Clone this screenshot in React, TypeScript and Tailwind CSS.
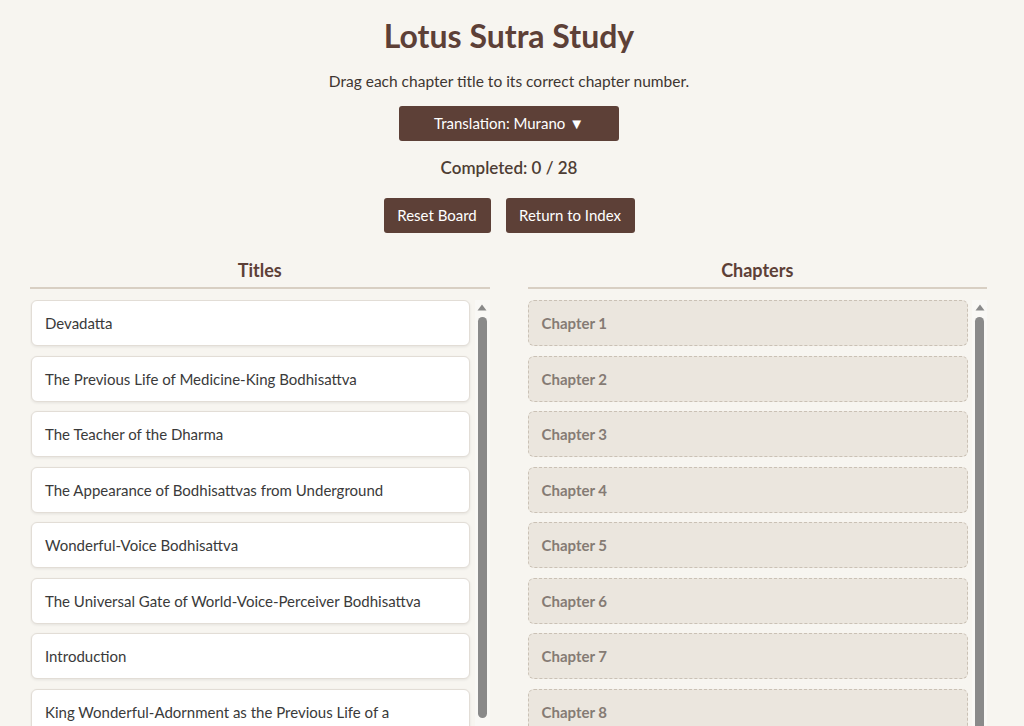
import React, { useState } from 'react';

const CHAPTERS = [
  'Introduction',
  'Expedients',
  'A Parable',
  'Understanding by Faith',
  'The Simile of Herbs',
  'Assurance of Future Buddhahood',
  'The Parable of a Magic City',
  'The Assurance of Future Buddhahood of the Five Hundred Disciples',
  'The Assurance of Future Buddhahood of the Sravakas Who Have Something More to Learn and the Sravakas Who Have Nothing More to Learn',
  'The Teacher of the Dharma',
  'Beholding the Stupa of Treasures',
  'Devadatta',
  'Encouragement for Keeping this Sutra',
  'Peaceful Practices',
  'The Appearance of Bodhisattvas from Underground',
  'The Duration of the Life of the Tathagata',
  'The Variety of Merits',
  'The Merits of a Person Who Rejoices at Hearing This Sutra',
  'The Merits of the Teacher of the Dharma',
  'Never-Despising Bodhisattva',
  'The Supernatural Powers of the Tathagatas',
  'Transmission',
  'The Previous Life of Medicine-King Bodhisattva',
  'Wonderful-Voice Bodhisattva',
  'The Universal Gate of World-Voice-Perceiver Bodhisattva',
  'Dharanis',
  'King Wonderful-Adornment as the Previous Life of a Bodhisattva',
  'The Encouragement of Universal-Sage Bodhisattva',
];

// shuffled order of the title cards (chapter indexes)
const START_ORDER = [11, 22, 9, 14, 23, 24, 0, 26, 3, 17, 1, 20, 6, 12, 27, 4, 15, 8, 19, 2, 25, 10, 7, 18, 13, 5, 21, 16];

function ScrollTrack({ thumb }: { thumb: string }) {
  return (
    <div className="w-[15px] shrink-0 flex flex-col items-center bg-[#f9f8f5]">
      <svg width="10" height="7" viewBox="0 0 10 7" className="mt-[4px]">
        <path d="M5 0.5 L9.5 6.5 L0.5 6.5 Z" fill="#8a8a8a" />
      </svg>
      <div className={`mt-[6px] w-[9px] rounded-full bg-[#8a8a8a] ${thumb}`} />
    </div>
  );
}

export default function App() {
  const [pool, setPool] = useState<number[]>(START_ORDER);
  const [placed, setPlaced] = useState<Record<number, number>>({});
  const [dragging, setDragging] = useState<number | null>(null);

  const done = Object.keys(placed).length;

  const handleDrop = (slot: number) => {
    if (dragging === null) return;
    if (dragging !== slot) {
      setDragging(null);
      return;
    }
    setPlaced(prev => ({ ...prev, [slot]: dragging }));
    setPool(prev => prev.filter(i => i !== dragging));
    setDragging(null);
  };

  const reset = () => {
    setPool(START_ORDER);
    setPlaced({});
  };

  return (
    <div className="h-screen overflow-hidden bg-[#f7f5f0] text-[#3b302b] font-['Lato','Liberation_Sans',sans-serif]">
      {/* Header */}
      <div className="flex flex-col items-center pt-[16px] pr-[6px]">
        <h1 className="text-[32px] leading-[40px] font-bold text-[#5d4037]">Lotus Sutra Study</h1>
        <p className="mt-[15px] text-[15.5px] leading-[20px] text-[#3e3631]">
          Drag each chapter title to its correct chapter number.
        </p>
        <button className="mt-[15px] w-[220px] h-[35px] rounded-[3px] bg-[#5d4037] text-white text-[15px]">
          Translation: Murano ▼
        </button>
        <div className="mt-[16px] text-[17px] leading-[22px] font-semibold text-[#4e3d34]">Completed: {done} / 28</div>
        <div className="mt-[19px] flex gap-[15px]">
          <button onClick={reset} className="w-[107px] h-[35px] rounded-[3px] bg-[#5d4037] text-white text-[15px]">
            Reset Board
          </button>
          <button className="w-[129px] h-[35px] rounded-[3px] bg-[#5d4037] text-white text-[15px]">
            Return to Index
          </button>
        </div>
      </div>

      {/* Board */}
      <div className="mt-[25px] pl-[30px] pr-[37px] grid grid-cols-2 gap-[38px]">
        <section>
          <h2 className="text-[18px] leading-[24px] font-bold text-[#5d4037] text-center pb-[5px] border-b-2 border-[#d8cfc3]">
            Titles
          </h2>
          <div className="mt-[11px] h-[440px] flex">
            <div className="flex-1 overflow-y-auto pl-[1px] pr-[5px] [scrollbar-width:none]">
              <div className="flex flex-col gap-[9.5px] pb-[2px]">
                {pool.map(i => (
                  <div
                    key={i}
                    draggable
                    onDragStart={() => setDragging(i)}
                    className="px-[13px] py-[12px] bg-white border border-[#e2ddd6] rounded-[6px] shadow-[0_1px_3px_rgba(0,0,0,0.08)] text-[15px] leading-[20px] text-[#3a3a3a] cursor-grab"
                  >
                    {CHAPTERS[i]}
                  </div>
                ))}
              </div>
            </div>
            <ScrollTrack thumb="h-[401px]" />
          </div>
        </section>

        <section>
          <h2 className="text-[18px] leading-[24px] font-bold text-[#5d4037] text-center pb-[5px] border-b-2 border-[#d8cfc3]">
            Chapters
          </h2>
          <div className="mt-[11px] h-[440px] flex">
            <div className="flex-1 overflow-y-auto pr-[4px] [scrollbar-width:none]">
              <div className="flex flex-col gap-[9.5px] pb-[2px]">
                {CHAPTERS.map((_, n) => (
                  <div
                    key={n}
                    onDragOver={e => e.preventDefault()}
                    onDrop={() => handleDrop(n)}
                    className={
                      placed[n] !== undefined
                        ? 'px-[13px] py-[12px] bg-[#e8f0e3] border border-[#b9cdb0] rounded-[6px] text-[15px] leading-[20px] text-[#3a3a3a]'
                        : 'px-[13px] py-[12px] bg-[#ebe6de] border border-dashed border-[#cac1b5] rounded-[6px] text-[15px] leading-[20px] font-bold text-[#857b74]'
                    }
                  >
                    {placed[n] !== undefined ? `${n + 1}. ${CHAPTERS[placed[n]]}` : `Chapter ${n + 1}`}
                  </div>
                ))}
              </div>
            </div>
            <ScrollTrack thumb="h-[420px]" />
          </div>
        </section>
      </div>
    </div>
  );
}
